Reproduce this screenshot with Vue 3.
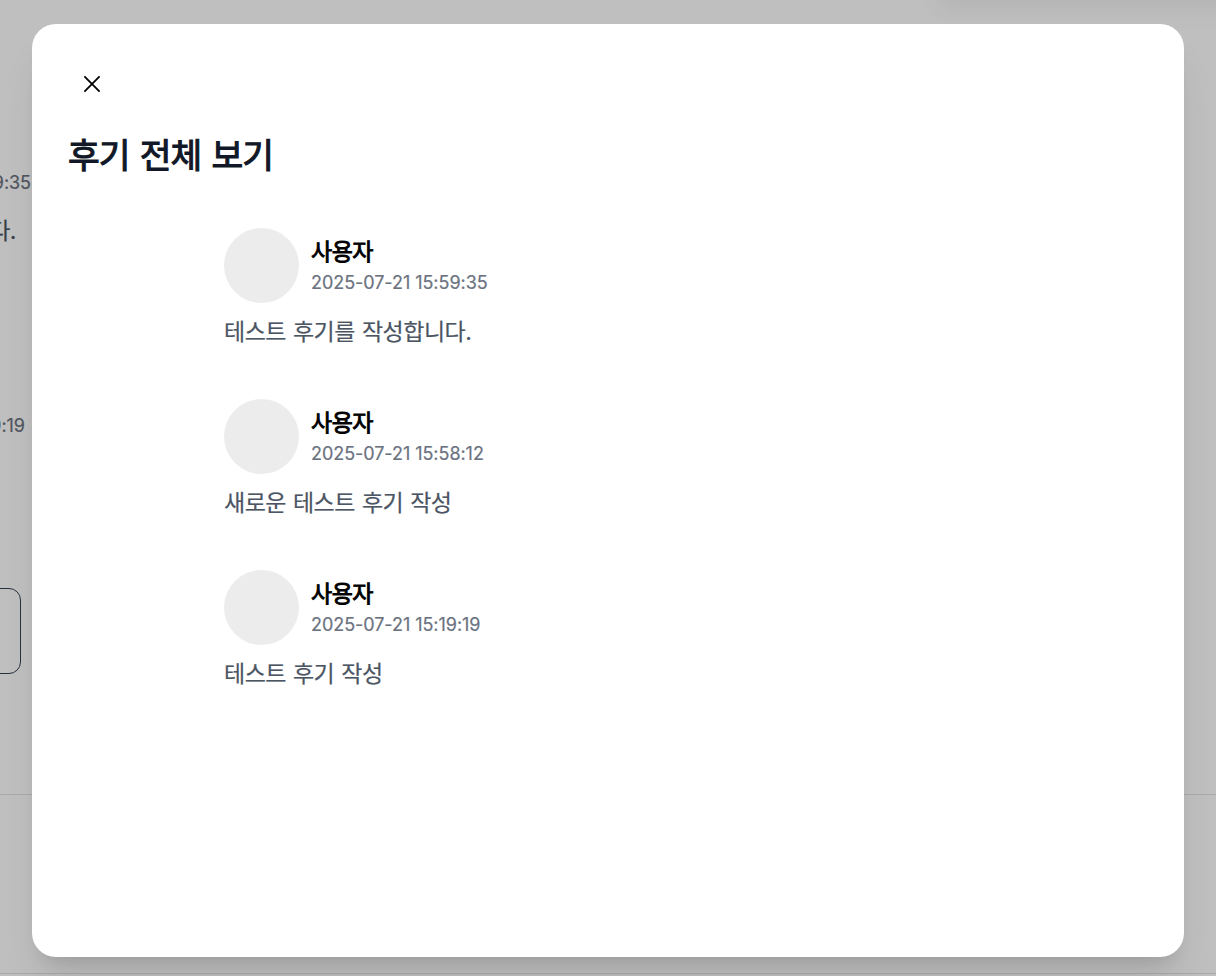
<!-- src/components/review/ReviewModal.vue -->
<template>
  <div class="page">
    <!-- Page behind the modal -->
    <div class="background" aria-hidden="true">
      <div class="floating-card"></div>
      <main class="content">
        <div class="peek peek-first">
          <span class="peek-date">{{ reviews[0].createdAt }}</span>
          <span class="peek-text">{{ reviews[0].content }}</span>
        </div>
        <div class="peek peek-last">
          <span class="peek-date">{{ reviews[2].createdAt }}</span>
        </div>
        <div class="more-button"></div>
      </main>
      <section class="section"></section>
    </div>

    <div v-if="isOpen" class="overlay">
      <div class="modal" role="dialog" aria-modal="true">
        <button class="close-button" aria-label="닫기" @click="close">
          <svg width="24" height="24" viewBox="0 0 24 24" fill="none">
            <path d="M4.4 4.4L19.6 19.6M19.6 4.4L4.4 19.6" stroke="#000" stroke-width="1.8" />
          </svg>
        </button>
        <h2 class="title">후기 전체 보기</h2>
        <ul class="review-list">
          <li v-for="review in reviews" :key="review.id" class="review">
            <div class="profile">
              <div class="avatar"></div>
              <div class="profile-info">
                <span class="name">{{ review.name }}</span>
                <span class="date">{{ review.createdAt }}</span>
              </div>
            </div>
            <p class="review-content">{{ review.content }}</p>
          </li>
        </ul>
      </div>
    </div>
  </div>
</template>

<script setup>
import { ref } from 'vue';

const isOpen = ref(true);

const reviews = ref([
  { id: 3, name: '사용자', createdAt: '2025-07-21 15:59:35', content: '테스트 후기를 작성합니다.' },
  { id: 2, name: '사용자', createdAt: '2025-07-21 15:58:12', content: '새로운 테스트 후기 작성' },
  { id: 1, name: '사용자', createdAt: '2025-07-21 15:19:19', content: '테스트 후기 작성' },
]);

const close = () => {
  isOpen.value = false;
};
</script>

<style>
body {
  margin: 0;
}
</style>

<style scoped>
.page {
  position: relative;
  height: 976px;
  overflow: hidden;
  background: #fff;
  font-family: Inter, 'Noto Sans CJK KR', sans-serif;
}

/* Background page */
.background {
  height: 976px;
  display: flex;
  flex-direction: column;
}

.floating-card {
  position: absolute;
  top: -100px;
  left: 940px;
  width: 320px;
  height: 96px;
  box-shadow: 0 10px 25px rgba(0, 0, 0, 0.08);
}

.content {
  box-sizing: border-box;
  height: 795px;
  padding-top: 169px;
  border-bottom: 1px solid #e2e2e2;
}

.peek {
  display: flex;
  flex-direction: column;
  align-items: flex-end;
  white-space: nowrap;
}

.peek-first {
  width: 31px;
  height: 243px;
}

.peek-last {
  width: 25px;
  height: 176px;
}

.peek-date {
  font-size: 18px;
  line-height: 28px;
  letter-spacing: -0.05px;
  color: #6b7280;
  -webkit-text-stroke: 0.2px #6b7280;
}

.peek-text {
  margin: 16px 15px 0 0;
  font-size: 23px;
  line-height: 36px;
  letter-spacing: -0.5px;
  color: #4b5563;
  -webkit-text-stroke: 0.2px #4b5563;
}

.more-button {
  box-sizing: border-box;
  width: 41px;
  height: 86px;
  margin-left: -20px;
  border: 1px solid #334155;
  border-radius: 12px;
}

.section {
  height: 178px;
  border-bottom: 1px solid #e2e2e2;
}

/* Modal */
.overlay {
  position: absolute;
  inset: 0;
  box-sizing: border-box;
  padding: 24px 32px 19px;
  background: rgba(0, 0, 0, 0.25);
}

.modal {
  box-sizing: border-box;
  height: 933px;
  padding: 36px;
  border-radius: 24px;
  background: #fff;
  box-shadow: 0 30px 38px -8px rgba(0, 0, 0, 0.1), 0 12px 15px -9px rgba(0, 0, 0, 0.1);
}

.close-button {
  display: flex;
  align-items: center;
  justify-content: center;
  width: 48px;
  height: 48px;
  padding: 0;
  border: none;
  background: none;
  cursor: pointer;
}

.title {
  margin: 24px 0 0;
  font-size: 34.5px;
  font-weight: 400;
  line-height: 48px;
  letter-spacing: -1px;
  word-spacing: 1.6px;
  color: #111827;
  -webkit-text-stroke: 1.1px #111827;
}

.review-list {
  display: flex;
  flex-direction: column;
  gap: 48px;
  margin: 48px 156px 0;
  padding: 0;
  list-style: none;
}

.review {
  height: 123px;
}

.profile {
  display: flex;
  align-items: center;
  gap: 12px;
}

.avatar {
  width: 75px;
  height: 75px;
  border-radius: 50%;
  background: #ececec;
}

.profile-info {
  display: flex;
  flex-direction: column;
  padding-top: 2px;
}

.name {
  font-size: 23px;
  font-weight: 400;
  line-height: 33px;
  letter-spacing: -0.5px;
  color: #000;
  -webkit-text-stroke: 0.9px #000;
}

.date {
  font-size: 18px;
  line-height: 28px;
  letter-spacing: -0.05px;
  color: #6b7280;
  -webkit-text-stroke: 0.2px #6b7280;
}

.review-content {
  margin: 11px 0 0;
  font-size: 23px;
  line-height: 36px;
  letter-spacing: -0.5px;
  word-spacing: 1px;
  color: #4b5563;
  -webkit-text-stroke: 0.2px #4b5563;
}
</style>
